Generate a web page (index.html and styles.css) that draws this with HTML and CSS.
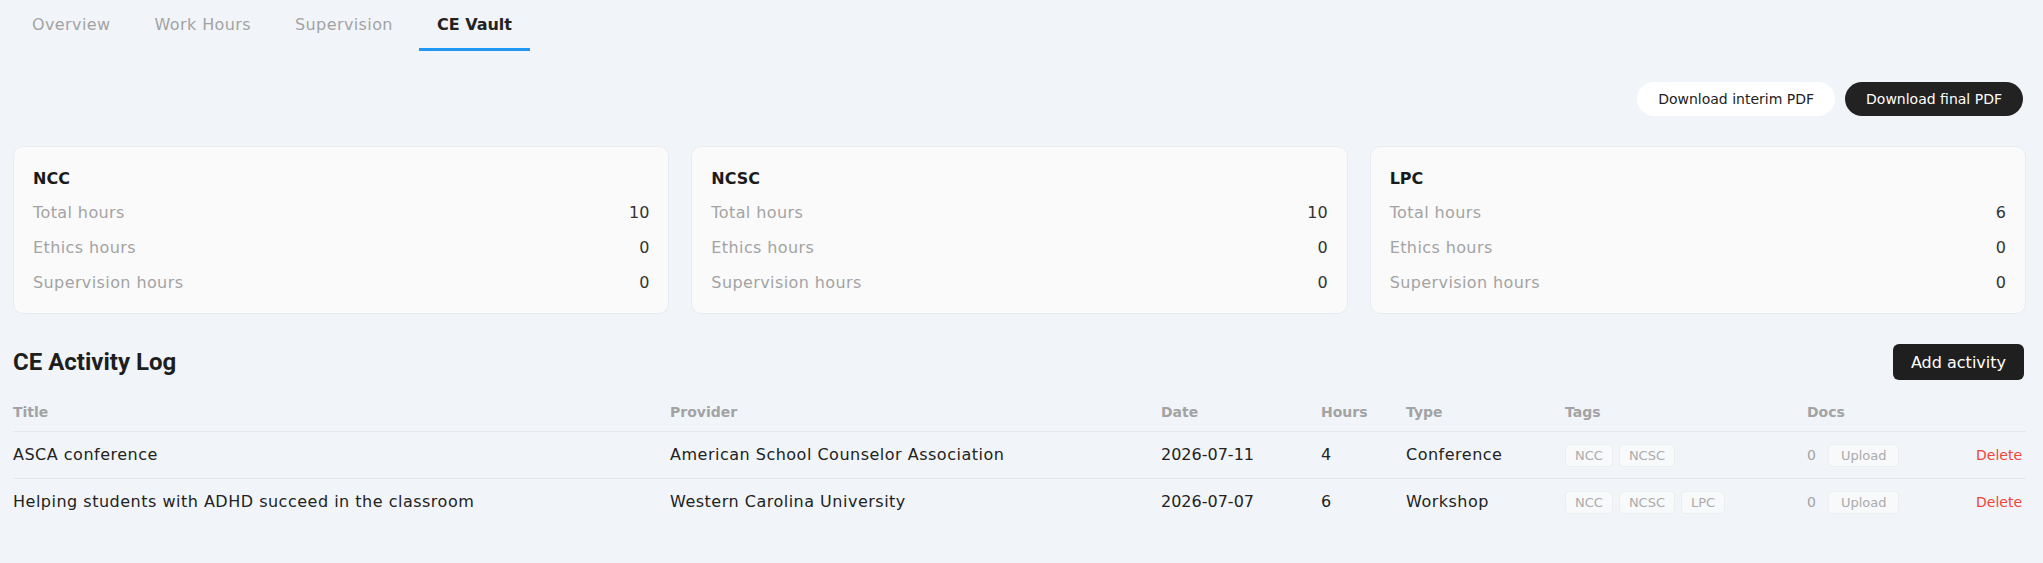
FILE: index.html
```html
<!DOCTYPE html>
<html lang="en">
<head>
<meta charset="utf-8">
<title>CE Vault</title>
<link rel="stylesheet" href="styles.css">
</head>
<body>
<div class="page">
  <nav class="tabs">
    <a class="tab">Overview</a>
    <a class="tab">Work Hours</a>
    <a class="tab">Supervision</a>
    <a class="tab active">CE Vault</a>
  </nav>

  <div class="toolbar">
    <button class="pill pill-light">Download interim PDF</button>
    <button class="pill pill-dark">Download final PDF</button>
  </div>

  <section class="cards">
    <div class="card">
      <div class="card-title">NCC</div>
      <div class="card-row"><span class="label">Total hours</span><span class="value">10</span></div>
      <div class="card-row"><span class="label">Ethics hours</span><span class="value">0</span></div>
      <div class="card-row"><span class="label">Supervision hours</span><span class="value">0</span></div>
    </div>
    <div class="card">
      <div class="card-title">NCSC</div>
      <div class="card-row"><span class="label">Total hours</span><span class="value">10</span></div>
      <div class="card-row"><span class="label">Ethics hours</span><span class="value">0</span></div>
      <div class="card-row"><span class="label">Supervision hours</span><span class="value">0</span></div>
    </div>
    <div class="card">
      <div class="card-title">LPC</div>
      <div class="card-row"><span class="label">Total hours</span><span class="value">6</span></div>
      <div class="card-row"><span class="label">Ethics hours</span><span class="value">0</span></div>
      <div class="card-row"><span class="label">Supervision hours</span><span class="value">0</span></div>
    </div>
  </section>

  <section class="log">
    <div class="log-head">
      <h2 class="log-title">CE Activity Log</h2>
      <button class="add-btn">Add activity</button>
    </div>
    <div class="table">
      <div class="trow thead">
        <div>Title</div>
        <div>Provider</div>
        <div>Date</div>
        <div>Hours</div>
        <div>Type</div>
        <div>Tags</div>
        <div>Docs</div>
        <div></div>
      </div>
      <div class="trow tbody">
        <div class="txt">ASCA conference</div>
        <div class="txt">American School Counselor Association</div>
        <div class="num">2026-07-11</div>
        <div class="num">4</div>
        <div class="txt">Conference</div>
        <div class="tags"><span class="chip">NCC</span><span class="chip">NCSC</span></div>
        <div class="docs"><span class="count">0</span><span class="chip upload">Upload</span></div>
        <div class="action"><span class="delete">Delete</span></div>
      </div>
      <div class="trow tbody">
        <div class="txt">Helping students with ADHD succeed in the classroom</div>
        <div class="txt">Western Carolina University</div>
        <div class="num">2026-07-07</div>
        <div class="num">6</div>
        <div class="txt">Workshop</div>
        <div class="tags"><span class="chip">NCC</span><span class="chip">NCSC</span><span class="chip">LPC</span></div>
        <div class="docs"><span class="count">0</span><span class="chip upload">Upload</span></div>
        <div class="action"><span class="delete">Delete</span></div>
      </div>
    </div>
  </section>
</div>
</body>
</html>
```

FILE: styles.css
```css
* { box-sizing: border-box; }

html, body {
  margin: 0;
  background: #f1f5f9;
}

body {
  font-family: "DejaVu Sans", "Noto Sans", sans-serif;
  font-size: 16px;
  color: #222;
}

.page {
  padding: 0 17px 0 13px;
}

/* Tabs */
.tabs {
  display: flex;
  gap: 8px;
  margin-left: 1px;
}

.tab {
  display: block;
  padding: 13px 18px 11px;
  line-height: 24px;
  font-size: 16px;
  letter-spacing: 0.4px;
  color: #a3a3a3;
  border-bottom: 3px solid transparent;
}

.tab.active {
  color: #222;
  font-weight: 600;
  letter-spacing: 0;
  border-bottom-color: #2196f3;
}

/* Toolbar */
.toolbar {
  display: flex;
  justify-content: flex-end;
  gap: 10px;
  margin-top: 31px;
  margin-right: 3px;
}

.pill {
  font-family: inherit;
  height: 34px;
  padding: 0 21px;
  border-radius: 17px;
  font-size: 14px;
  border: none;
  line-height: 34px;
}

.pill-light {
  background: #ffffff;
  color: #222;
}

.pill-dark {
  background: #222222;
  color: #ffffff;
}

/* Cards */
.cards {
  display: grid;
  grid-template-columns: repeat(3, 1fr);
  gap: 22px;
  margin-top: 30px;
}

.card {
  background: #fafafa;
  border: 1px solid #e8ecf0;
  border-radius: 10px;
  padding: 20px 19px 18px 19px;
}

.card-title {
  font-weight: 700;
  line-height: 24px;
  margin-bottom: 10px;
  color: #1a1a1a;
  font-size: 16px;
}

.card-row {
  display: flex;
  justify-content: space-between;
  line-height: 24px;
}

.card-row + .card-row {
  margin-top: 11px;
}

.label {
  color: #a3a3a3;
  letter-spacing: 0.4px;
}

.value {
  color: #333;
}

/* Log */
.log {
  margin-top: 30px;
}

.log-head {
  display: flex;
  justify-content: space-between;
  align-items: center;
  height: 36px;
}

.log-title {
  margin: 0;
  font-family: Roboto, "Liberation Sans", sans-serif;
  font-weight: 700;
  font-size: 24px;
  color: #1e1e1e;
}

.add-btn {
  font-family: inherit;
  background: #1f1f1f;
  color: #fff;
  border: none;
  border-radius: 6px;
  height: 36px;
  padding: 0 18px;
  font-size: 16px;
  margin-right: 2px;
}

.table {
  margin-top: 12px;
}

.trow {
  display: grid;
  grid-template-columns: 657px 491px 160px 85px 159px 242px 1fr auto;
  align-items: center;
}

.thead {
  padding: 10px 0 9px;
  line-height: 20px;
  font-size: 14px;
  font-weight: 700;
  color: #a3a3a3;
  border-bottom: 1px solid #e6e9ec;
}

.tbody {
  padding: 11px 0;
  line-height: 24px;
}

.tbody + .tbody {
  border-top: 1px solid #e6e9ec;
}

.txt {
  letter-spacing: 0.5px;
}

.tags, .docs {
  display: flex;
  align-items: center;
  gap: 6px;
}

.docs {
  gap: 12px;
}

.chip {
  display: inline-block;
  border: 1px solid #eceef0;
  background: #f8f9fa;
  border-radius: 4px;
  font-size: 13px;
  line-height: 17px;
  padding: 2px 9px;
  color: #ababab;
}

.chip.upload {
  padding: 2px 12px;
}

.count {
  font-size: 14px;
  color: #a3a3a3;
}

.action {
  padding-right: 4px;
}

.delete {
  font-size: 14px;
  color: #f44336;
}
```
